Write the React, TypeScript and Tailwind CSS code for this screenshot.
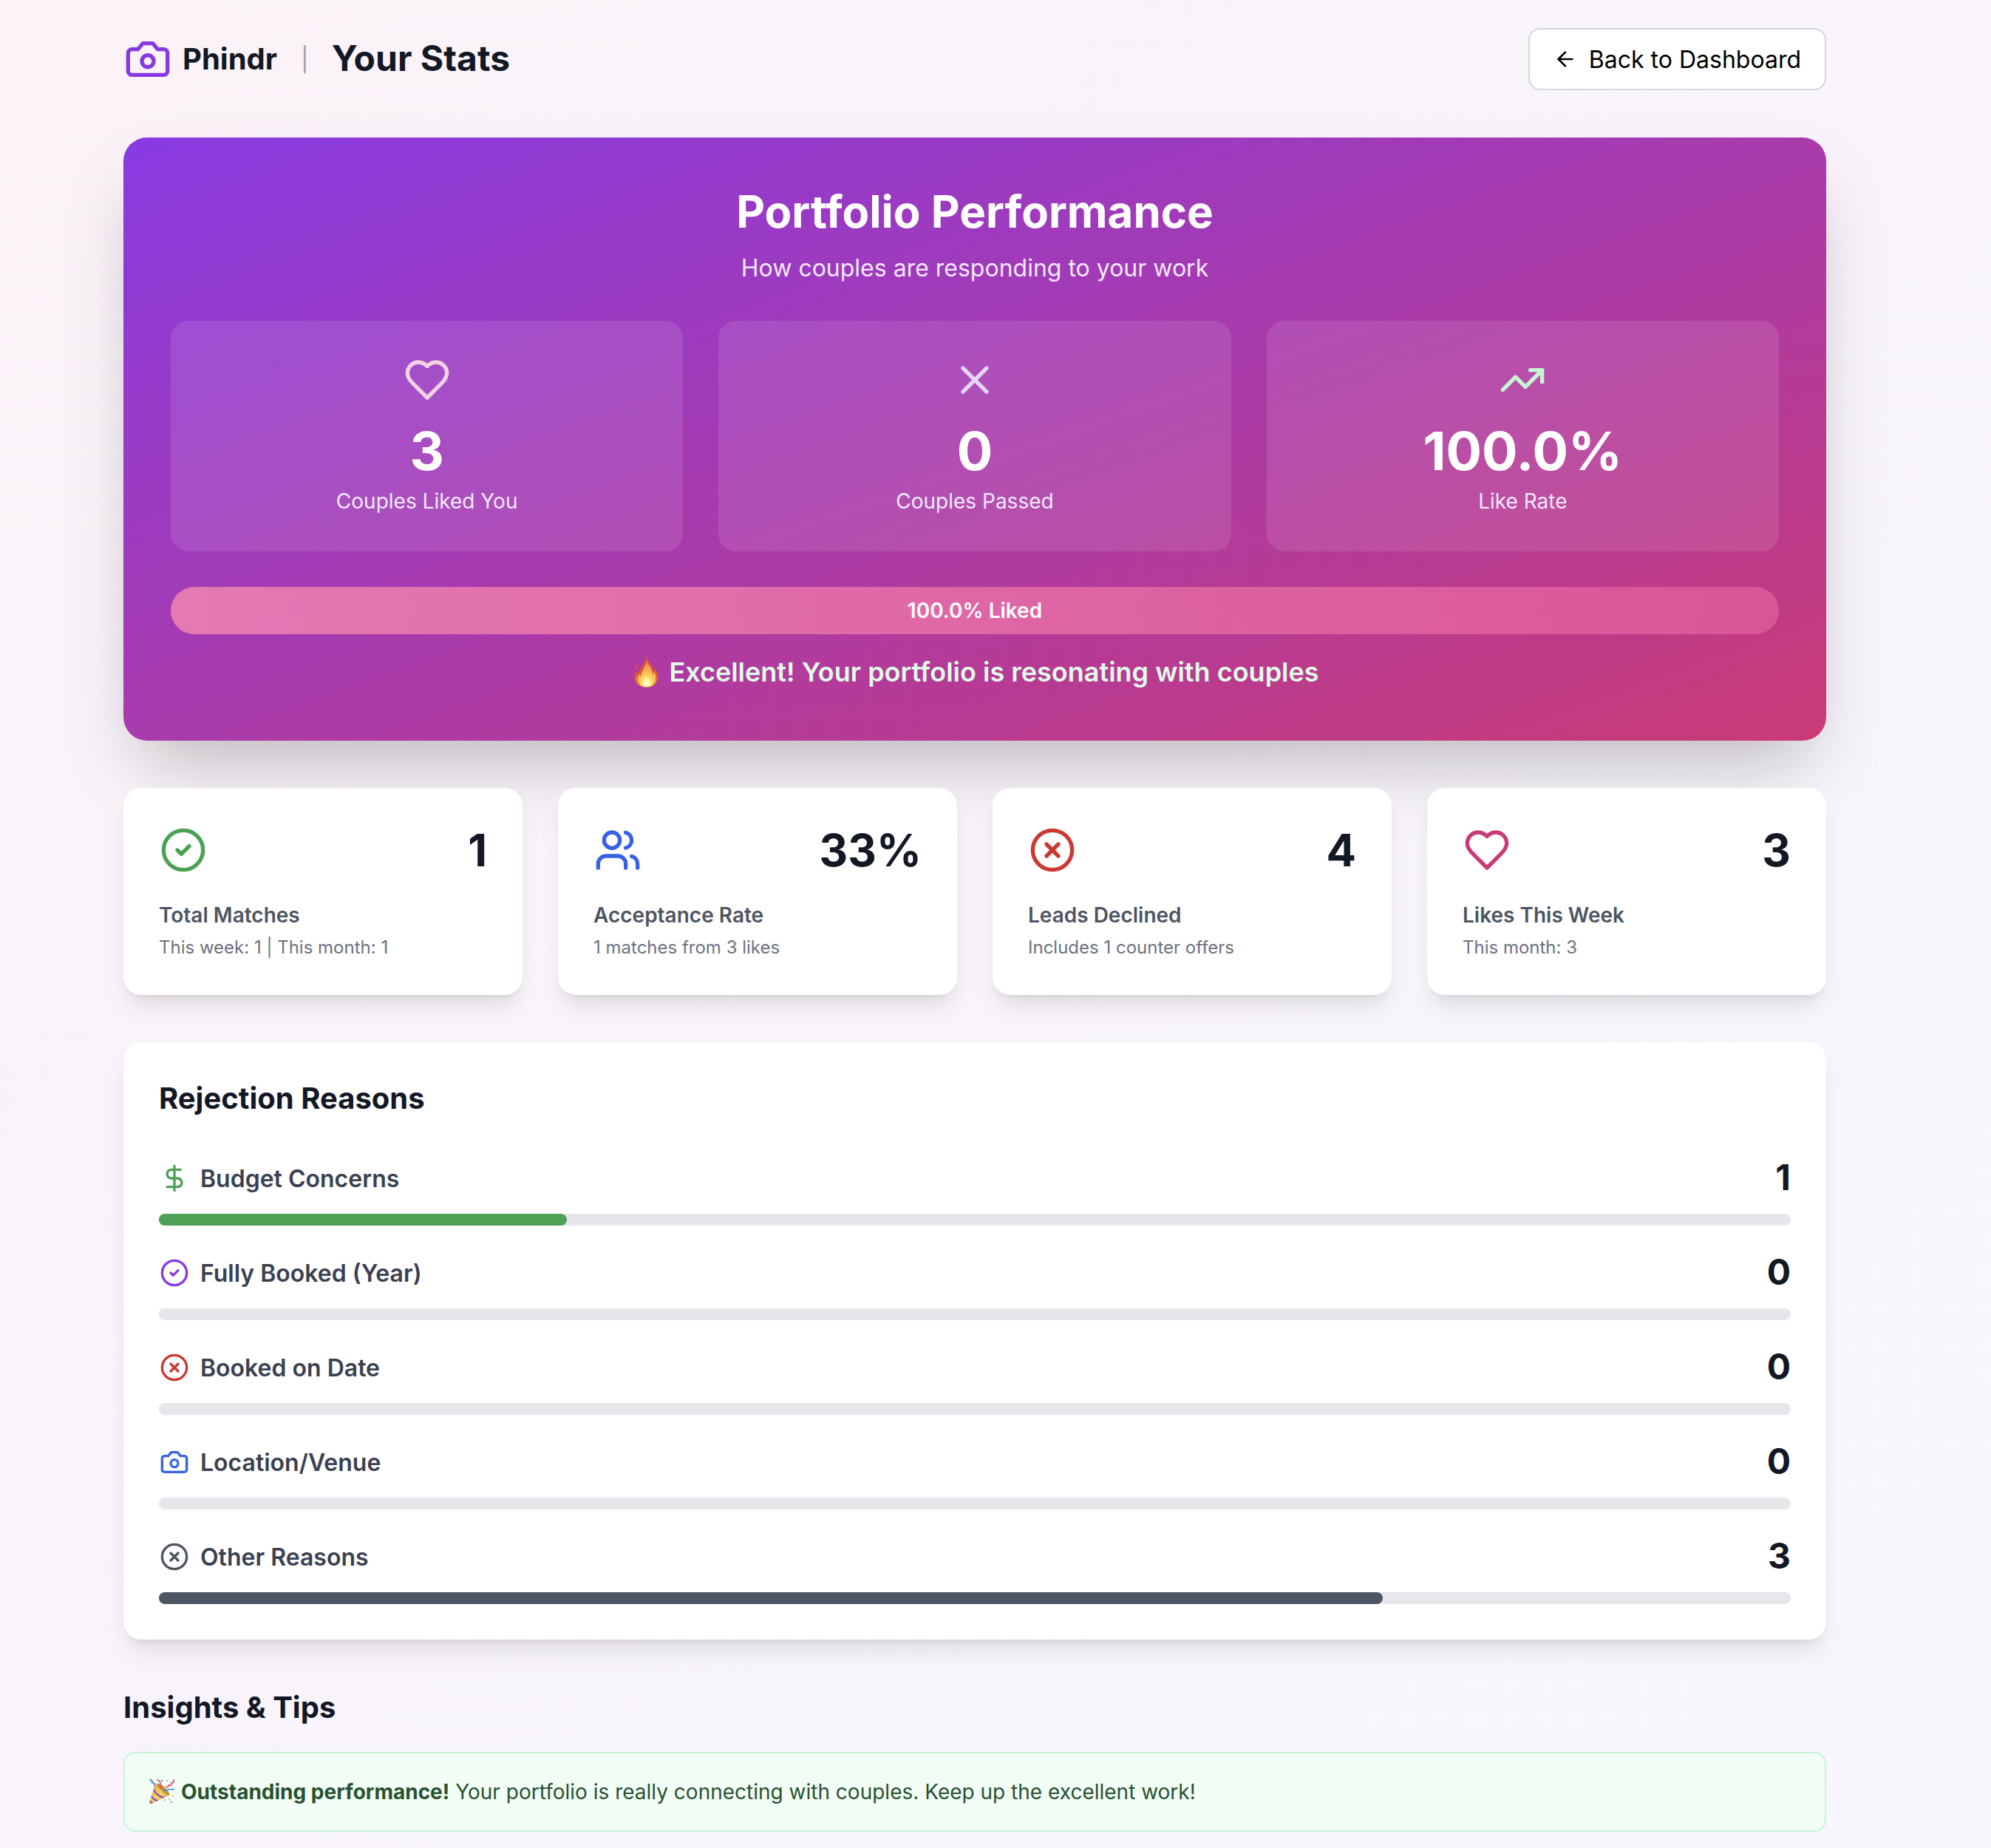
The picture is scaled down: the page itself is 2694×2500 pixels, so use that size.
import { ArrowLeft, CircleCheck, CircleX, DollarSign, TrendingUp, Users, X } from 'lucide-react'
import type { ComponentType } from 'react'

type IconProps = { className?: string }

function Camera({ className }: IconProps) {
  return (
    <svg className={className} viewBox="0 0 24 24" fill="none" stroke="currentColor" strokeWidth="2" strokeLinecap="round" strokeLinejoin="round">
      <path d="M14.5 4h-5L7 7H4a2 2 0 0 0-2 2v9a2 2 0 0 0 2 2h16a2 2 0 0 0 2-2V9a2 2 0 0 0-2-2h-3l-2.5-3z" />
      <circle cx="12" cy="13" r="3" />
    </svg>
  )
}

function Heart({ className }: IconProps) {
  return (
    <svg className={className} viewBox="0 0 24 24" fill="none" stroke="currentColor" strokeWidth="2" strokeLinecap="round" strokeLinejoin="round">
      <path d="M19 14c1.49-1.46 3-3.21 3-5.5A5.5 5.5 0 0 0 16.5 3c-1.76 0-3 .5-4.5 2-1.5-1.5-2.74-2-4.5-2A5.5 5.5 0 0 0 2 8.5c0 2.3 1.5 4.05 3 5.5l7 7Z" />
    </svg>
  )
}

function Flame({ className }: IconProps) {
  return (
    <svg className={className} viewBox="0 0 44 44">
      <defs>
        <linearGradient id="flameOuter" x1="0" y1="0" x2="0" y2="1">
          <stop offset="0" stopColor="#d8503c" />
          <stop offset="0.6" stopColor="#e4572f" />
          <stop offset="1" stopColor="#f0903a" />
        </linearGradient>
        <radialGradient id="flameInner" cx="0.5" cy="0.9" r="0.8">
          <stop offset="0" stopColor="#fffef0" />
          <stop offset="0.2" stopColor="#fdf6a0" />
          <stop offset="0.45" stopColor="#f8cc55" />
          <stop offset="0.8" stopColor="#f0a058" />
          <stop offset="1" stopColor="#e8804a" />
        </radialGradient>
      </defs>
      <path fill="url(#flameOuter)" d="M21 1c1 6 10 11 11 21 1-2 1-4 0-6 4 5 6 11 5 16-2 7-8 11-15 11S7 39 6 31c-1-5 1-8 3-11 0 2 0 4 1 5 1-5 3-7 6-11 3-4 5-8 5-13Z" />
      <path fill="#dc5a3c" d="M9 11c-2 3-2 5-1 8 2-2 2-5 1-8Z" />
      <path fill="url(#flameInner)" d="M22 5c1 7 7 11 8 20 2-1 2-3 2-4 3 5 3 11 1 15-2 4-6 6-11 6s-9-2-11-6c-2-4-1-9 1-12 0 2 1 3 2 4 1-9 8-14 8-23Z" />
    </svg>
  )
}

function PartyPopper({ className }: IconProps) {
  return (
    <svg className={className} viewBox="0 0 36 36">
      <defs>
        <linearGradient id="cone" x1="0" y1="0" x2="1" y2="1">
          <stop offset="0" stopColor="#d9a13b" />
          <stop offset="0.5" stopColor="#f4d45c" />
          <stop offset="1" stopColor="#c8902f" />
        </linearGradient>
        <clipPath id="coneClip">
          <path d="M9 8 1 33c0 2 1 2 3 1l25-12C25 18 15 11 9 8Z" />
        </clipPath>
      </defs>
      <path fill="url(#cone)" d="M9 8 1 33c0 2 1 2 3 1l25-12C25 18 15 11 9 8Z" />
      <g clipPath="url(#coneClip)" stroke="#9150c0" strokeWidth="2.4" fill="none">
        <path d="M6 14c3 6 9 11 17 13M3 22c2 5 6 8 12 9M1 29c1 3 3 4 6 5" />
      </g>
      <path fill="#c2913a" d="M10 7c5-1 9 2 13 6s6 8 5 10c-5-1-17-12-18-16Z" />
      <g fill="none" strokeWidth="1.8" strokeLinecap="round">
        <path stroke="#5580cc" d="M2 2c3 0 4 2 2 4 3-1 5 1 4 4" />
        <path stroke="#5b93de" d="M20 18c3-3 7-4 14-3" />
        <path stroke="#d8596f" d="M12 2c4 1 5 5 4 11M34 2c1 3-1 4-3 4 1 3-2 4-4 3 0 3-2 3-3 2" />
      </g>
      <g fill="#d8839f">
        <circle cx="25" cy="3" r="1.1" />
        <circle cx="31" cy="32" r="1.3" />
      </g>
      <circle cx="18" cy="3" r="1.2" fill="#5580cc" />
      <circle cx="22" cy="29" r="1.1" fill="#6f8fd8" />
      <g fill="#deae68">
        <circle cx="33" cy="24" r="1.2" />
        <circle cx="28" cy="28" r="1.2" />
      </g>
    </svg>
  )
}

type Stat = {
  icon: ComponentType<IconProps>
  iconClass: string
  value: string
  label: string
  detail?: string
}

const performance: Stat[] = [
  { icon: Heart, iconClass: 'text-[#f4d1e6]', value: '3', label: 'Couples Liked You' },
  { icon: X, iconClass: 'text-[#e6d6fc]', value: '0', label: 'Couples Passed' },
  { icon: TrendingUp, iconClass: 'text-[#c6f5d3]', value: '100.0%', label: 'Like Rate' },
]

const stats: Stat[] = [
  { icon: CircleCheck, iconClass: 'text-[#4ca154]', value: '1', label: 'Total Matches', detail: 'This week: 1 | This month: 1' },
  { icon: Users, iconClass: 'text-[#3662e3]', value: '33%', label: 'Acceptance Rate', detail: '1 matches from 3 likes' },
  { icon: CircleX, iconClass: 'text-[#ca3a32]', value: '4', label: 'Leads Declined', detail: 'Includes 1 counter offers' },
  { icon: Heart, iconClass: 'text-[#c93b76]', value: '3', label: 'Likes This Week', detail: 'This month: 3' },
]

const reasons = [
  { icon: DollarSign, iconClass: 'text-[#4ca154]', barClass: 'bg-[#4ca154]', label: 'Budget Concerns', count: 1 },
  { icon: CircleCheck, iconClass: 'text-[#883ae1]', barClass: 'bg-[#883ae1]', label: 'Fully Booked (Year)', count: 0 },
  { icon: CircleX, iconClass: 'text-[#ca3a32]', barClass: 'bg-[#ca3a32]', label: 'Booked on Date', count: 0 },
  { icon: Camera, iconClass: 'text-[#3662e3]', barClass: 'bg-[#3662e3]', label: 'Location/Venue', count: 0 },
  { icon: CircleX, iconClass: 'text-[#4d5562]', barClass: 'bg-[#4d5562]', label: 'Other Reasons', count: 3 },
]

const totalReasons = reasons.reduce((sum, r) => sum + r.count, 0)

function Header() {
  return (
    <header className="flex items-center justify-between mb-16">
      <div className="flex items-center gap-8">
        <div className="flex items-center gap-[15px]">
          <Camera className="size-16 ml-px text-[#883ae1]" />
          <span className="text-[40px] leading-14 font-bold">Phindr</span>
        </div>
        <span className="pt-0.5 text-[32px] leading-12 text-[#9ea3ae]">|</span>
        <h1 className="pb-0.5 -ml-px text-[48px] leading-16 font-bold">Your Stats</h1>
      </div>
      <button className="flex items-center gap-4 h-[84px] px-8 bg-white text-black border-2 border-[#d2d5da] rounded-2xl text-[32px] leading-12">
        <ArrowLeft className="size-8" />
        <span className="pt-0.5">Back to Dashboard</span>
      </button>
    </header>
  )
}

function PerformanceCard() {
  return (
    <section className="p-16 mb-16 rounded-[32px] bg-linear-to-br/srgb from-[#883ae1] to-[#c93b76] text-white text-center shadow-[0_50px_100px_-24px_rgba(0,0,0,0.25)]">
      <h2 className="text-[60px] leading-18 font-bold mb-4">Portfolio Performance</h2>
      <p className="text-[32px] leading-[50px] text-[#f1e8fe] mb-[46px]">How couples are responding to your work</p>

      <div className="grid grid-cols-3 gap-12 mb-12">
        {performance.map(({ icon: Icon, iconClass, value, label }) => (
          <div key={label} className="flex flex-col items-center p-12 rounded-3xl bg-white/10">
            <Icon className={`size-16 mb-6 ${iconClass}`} />
            <div className="text-[72px] leading-20 font-bold">{value}</div>
            <div className="text-[28px] leading-10 text-[#f1e8fe] mt-2">{label}</div>
          </div>
        ))}
      </div>

      <div className="h-16 rounded-full bg-linear-to-r/srgb from-[#e479b4] to-[#da5597] flex items-center justify-center">
        <span className="text-[28px] leading-10 font-semibold">100.0% Liked</span>
      </div>

      <p className="mt-[23px] mb-px flex items-center justify-center text-[36px] leading-14 font-semibold text-[#e2fbe8]">
        <Flame className="size-11 mr-2" />
        Excellent! Your portfolio is resonating with couples
      </p>
    </section>
  )
}

function StatCard({ icon: Icon, iconClass, value, label, detail }: Stat) {
  return (
    <div className="p-12 bg-white rounded-3xl shadow-[0_20px_30px_-6px_rgba(0,0,0,0.1),0_8px_12px_-8px_rgba(0,0,0,0.1)]">
      <div className="flex items-center justify-between mb-8">
        <Icon className={`size-16 ml-px ${iconClass}`} />
        <span className="text-[60px] leading-18 font-bold">{value}</span>
      </div>
      <h3 className="text-[28px] leading-10 font-semibold text-[#4d5562]">{label}</h3>
      <p className="text-[24px] leading-8 text-[#6c727f] mt-2">{detail}</p>
    </div>
  )
}

function RejectionReasons() {
  return (
    <section className="p-12 mb-16 bg-white rounded-3xl shadow-[0_20px_30px_-6px_rgba(0,0,0,0.1),0_8px_12px_-8px_rgba(0,0,0,0.1)]">
      <h2 className="text-[40px] leading-14 font-bold mb-12">Rejection Reasons</h2>
      <div className="space-y-8">
        {reasons.map(({ icon: Icon, iconClass, barClass, label, count }) => (
          <div key={label}>
            <div className="flex items-center justify-between h-16 mb-4">
              <div className="flex items-center gap-[15px]">
                <Icon className={`size-10 ml-px ${iconClass}`} />
                <span className="pt-0.5 text-[32px] leading-12 font-semibold text-[#394150]">{label}</span>
              </div>
              <span className="pb-0.5 text-[48px] leading-16 font-bold">{count}</span>
            </div>
            <div className="h-4 rounded-full bg-[#e5e7eb]">
              <div className={`h-4 rounded-full ${barClass}`} style={{ width: `${(count / totalReasons) * 100}%` }} />
            </div>
          </div>
        ))}
      </div>
    </section>
  )
}

export default function App() {
  return (
    <div className="h-[2500px] overflow-hidden pt-[38px] pl-[167px] bg-linear-to-br/srgb from-[#fbf3f8] via-[#f9f4fb] to-[#f8f6fd] text-[#131825] font-['Inter',sans-serif]">
      <div className="w-[2304px]">
        <Header />
        <PerformanceCard />

        <div className="grid grid-cols-4 gap-12 mb-16">
          {stats.map((stat) => (
            <StatCard key={stat.label} {...stat} />
          ))}
        </div>

        <RejectionReasons />

        <section>
          <h2 className="text-[40px] leading-14 font-bold mb-8">Insights &amp; Tips</h2>
          <div className="flex items-center p-8 rounded-2xl border-2 border-[#c6f5d3] bg-[#f2fdf5] text-[28px] leading-10 text-[#285230]">
            <PartyPopper className="size-9 mr-2" />
            <p>
              <strong className="font-bold">Outstanding performance!</strong> Your portfolio is really connecting with couples. Keep up the excellent work!
            </p>
          </div>
        </section>
      </div>
    </div>
  )
}
